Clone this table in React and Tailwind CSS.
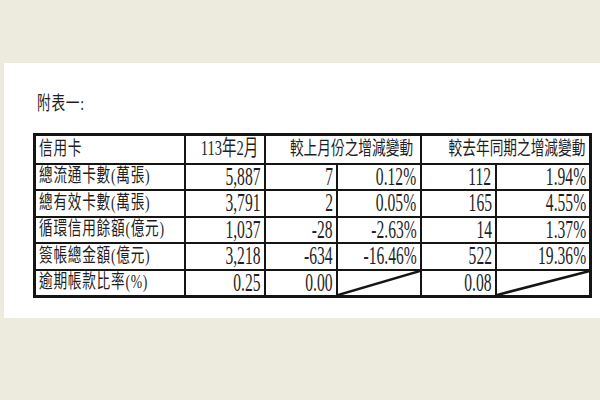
const rows = [
  ['總流通卡數(萬張)', '5,887', '7', '0.12%', '112', '1.94%'],
  ['總有效卡數(萬張)', '3,791', '2', '0.05%', '165', '4.55%'],
  ['循環信用餘額(億元)', '1,037', '-28', '-2.63%', '14', '1.37%'],
  ['簽帳總金額(億元)', '3,218', '-634', '-16.46%', '522', '19.36%'],
  ['逾期帳款比率(%)', '0.25', '0.00', null, '0.08', null],
]

const cell = "border-2 border-[#151515] p-0 leading-[18px]"
const label = "inline-block origin-left scale-x-[0.72] text-[19px] leading-[18px] whitespace-nowrap tracking-[1px]"

function Num({ children }) {
  return (
    <div className="flex justify-end pr-[3px] h-[18px] items-center">
      <span className="inline-block shrink-0 origin-right scale-x-[0.6] text-[26px] leading-[18px] whitespace-nowrap font-['Liberation_Serif',serif]">
        {children}
      </span>
    </div>
  )
}

function Slash() {
  return (
    <svg className="absolute inset-0 h-full w-full" viewBox="0 0 100 100" preserveAspectRatio="none">
      <line x1="0" y1="100" x2="100" y2="0" stroke="#151515" strokeWidth="2.5" vectorEffect="non-scaling-stroke" />
    </svg>
  )
}

export default function App() {
  return (
    <div className="w-[600px] h-[400px] bg-[#ecebdd] pt-[63px] font-['Liberation_Serif','Noto_Sans_CJK_TC',serif] text-[#1e1e24]">
      <div className="ml-[4px] h-[255px] bg-white pt-[32px] pl-[29px]">
        <div className="pl-[4px] h-[18px] leading-[18px]">
          <span className={label + " text-[18px]"}>附表一:</span>
        </div>
        <table className="mt-[20px] w-[556px] table-fixed border-collapse border-[3px] border-[#151515]">
          <colgroup>
            <col className="w-[150px]" />
            <col className="w-[80px]" />
            <col className="w-[72px]" />
            <col className="w-[84px]" />
            <col className="w-[75px]" />
            <col className="w-[95px]" />
          </colgroup>
          <thead>
            <tr className="h-[29px]">
              <th className={cell + " text-left pl-[3px] font-normal"}>
                <span className={label}>信用卡</span>
              </th>
              <th className={cell + " font-normal"}>
                <span className="inline-block scale-x-[0.66] text-[22px] leading-[18px] whitespace-nowrap">113年2月</span>
              </th>
              <th colSpan={2} className={cell + " font-normal"}>
                <span className="inline-block scale-x-[0.72] text-[19px] leading-[18px] whitespace-nowrap">較上月份之增減變動</span>
              </th>
              <th colSpan={2} className={cell + " font-normal"}>
                <span className="inline-block scale-x-[0.72] text-[19px] leading-[18px] whitespace-nowrap">較去年同期之增減變動</span>
              </th>
            </tr>
          </thead>
          <tbody>
            {rows.map((r) => (
              <tr key={r[0]} className="h-[26.5px]">
                <td className={cell + " pl-[3px]"}>
                  <span className={label}>{r[0]}</span>
                </td>
                {r.slice(1).map((v, i) => (
                  <td key={i} className={cell + " relative"}>
                    {v === null ? <Slash /> : <Num>{v}</Num>}
                  </td>
                ))}
              </tr>
            ))}
          </tbody>
        </table>
      </div>
    </div>
  )
}
